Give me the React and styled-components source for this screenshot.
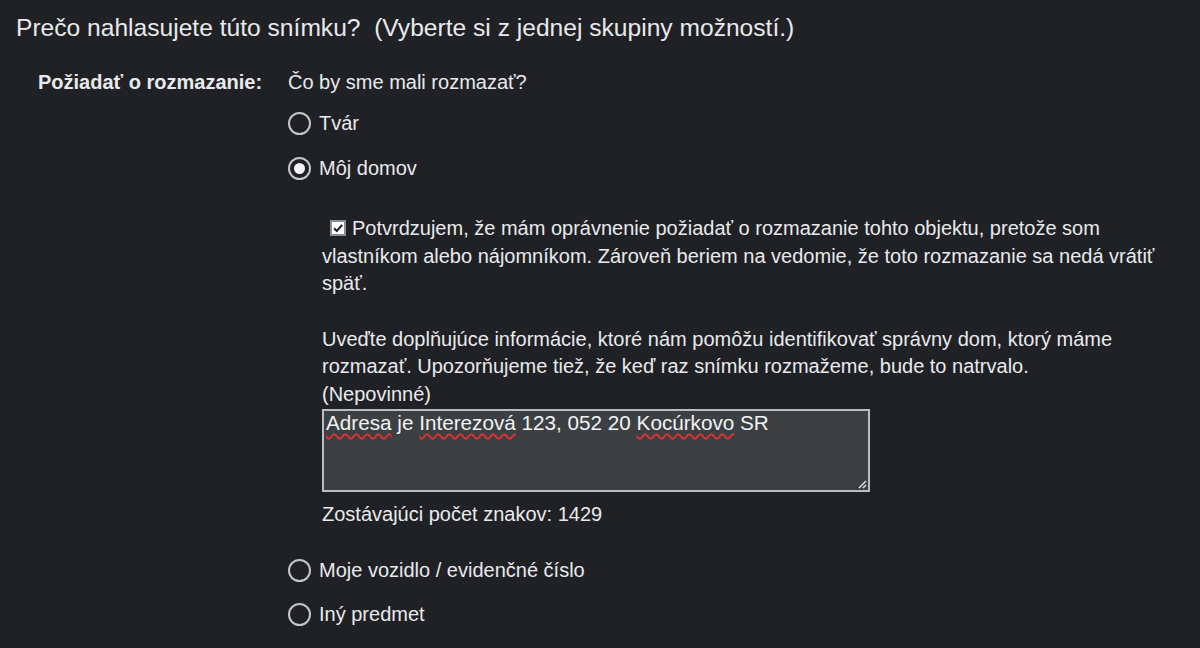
import React from "react";
import styled, { createGlobalStyle } from "styled-components";

const GlobalStyle = createGlobalStyle`
  html, body {
    margin: 0;
    padding: 0;
    background: #202124;
  }
  body {
    font-family: "Liberation Sans", Arial, sans-serif;
    color: #e8eaed;
  }
`;

const Page = styled.div`
  width: 1200px;
  height: 648px;
  box-sizing: border-box;
  padding: 14px 0 0 16px;
  background: #202124;
  overflow: hidden;
`;

const Title = styled.h1`
  margin: 0;
  font-size: 24.6px;
  font-weight: 400;
  line-height: 28px;
  color: #e8eaed;
  white-space: pre;
`;

const Row = styled.div`
  display: grid;
  grid-template-columns: 250px 1fr;
  margin-top: 26px;
  padding-left: 22px;
`;

const Label = styled.div`
  font-size: 20px;
  font-weight: 700;
  line-height: 28px;
`;

const Column = styled.div`
  display: flex;
  flex-direction: column;
  font-size: 20px;
`;

const Question = styled.div`
  line-height: 28px;
`;

const RadioRow = styled.label`
  display: flex;
  align-items: center;
  gap: 8px;
  height: 28px;
  line-height: 28px;
  margin-top: ${(p) => p.$gap}px;
`;

const RadioCircle = styled.span`
  position: relative;
  width: 23px;
  height: 23px;
  box-sizing: border-box;
  border: 2px solid #c4c7c5;
  border-radius: 50%;
  flex-shrink: 0;

  &::after {
    content: "";
    display: ${(p) => (p.$checked ? "block" : "none")};
    position: absolute;
    left: 4px;
    top: 4px;
    width: 11px;
    height: 11px;
    border-radius: 50%;
    background: #f1f3f4;
  }
`;

const Details = styled.div`
  padding-left: 34px;
  width: 850px;
  line-height: 27.5px;
`;

const Confirm = styled.p`
  margin: 33px 0 0;
`;

const CheckBox = styled.span`
  display: inline-block;
  vertical-align: -1px;
  width: 16px;
  height: 16px;
  margin: 0 6px 0 8px;
  box-sizing: border-box;
  border: 2px solid #8a8d91;
  background: #ffffff;
  position: relative;

  svg {
    position: absolute;
    left: 0;
    top: 0;
  }
`;

const Info = styled.p`
  margin: 28px 0 0;
`;

const TextBox = styled.div`
  position: relative;
  margin-top: 1px;
  width: 548px;
  height: 83px;
  box-sizing: border-box;
  border: 2px solid #b9bcc0;
  background: #3c4043;
  padding: 1px 2px;
  font-size: 20.7px;
  line-height: 22px;
  color: #f1f3f4;
`;

const Misspelled = styled.span`
  text-decoration: underline wavy #e03131;
  text-decoration-thickness: 1.5px;
  text-underline-offset: 3px;
`;

const Grip = styled.svg`
  position: absolute;
  right: 1px;
  bottom: 1px;
`;

const Counter = styled.div`
  margin-top: 8px;
  line-height: 28px;
`;

const Radio = ({ checked, gap, children }) => (
  <RadioRow $gap={gap}>
    <RadioCircle $checked={checked} />
    <span>{children}</span>
  </RadioRow>
);

export default function App() {
  return (
    <Page>
      <GlobalStyle />
      <Title>Prečo nahlasujete túto snímku?  (Vyberte si z jednej skupiny možností.)</Title>
      <Row>
        <Label>Požiadať o rozmazanie:</Label>
        <Column>
          <Question>Čo by sme mali rozmazať?</Question>
          <Radio gap={13}>Tvár</Radio>
          <Radio gap={17} checked>
            Môj domov
          </Radio>
          <Details>
            <Confirm>
              <CheckBox>
                <svg width="12" height="12" viewBox="0 0 12 12">
                  <path d="M2 6.2 L4.8 9 L10.2 2.8" fill="none" stroke="#202124" strokeWidth="2" />
                </svg>
              </CheckBox>
              Potvrdzujem, že mám oprávnenie požiadať o rozmazanie tohto objektu, pretože som
              vlastníkom alebo nájomníkom. Zároveň beriem na vedomie, že toto rozmazanie sa nedá vrátiť
              späť.
            </Confirm>
            <Info>
              Uveďte doplňujúce informácie, ktoré nám pomôžu identifikovať správny dom, ktorý máme
              rozmazať. Upozorňujeme tiež, že keď raz snímku rozmažeme, bude to natrvalo.
              <br />
              (Nepovinné)
            </Info>
            <TextBox>
              <Misspelled>Adresa</Misspelled> je <Misspelled>Interezová</Misspelled> 123, 052 20{" "}
              <Misspelled>Kocúrkovo</Misspelled> SR
              <Grip width="10" height="10" viewBox="0 0 10 10">
                <path d="M9 2 L2 9 M9 6 L6 9" stroke="#e8eaed" strokeWidth="1.4" />
              </Grip>
            </TextBox>
            <Counter>Zostávajúci počet znakov: 1429</Counter>
          </Details>
          <Radio gap={28}>Moje vozidlo / evidenčné číslo</Radio>
          <Radio gap={16}>Iný predmet</Radio>
        </Column>
      </Row>
    </Page>
  );
}
